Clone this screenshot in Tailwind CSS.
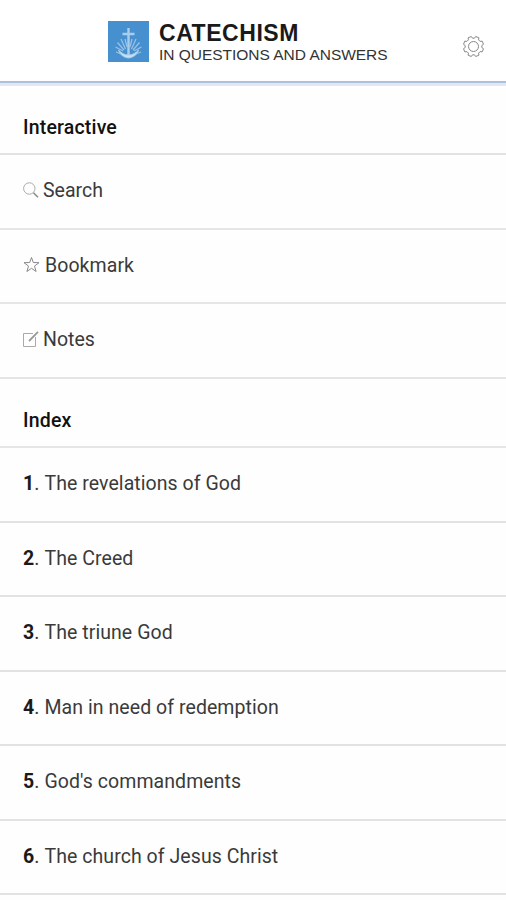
<!DOCTYPE html>
<html lang="en">
<head>
<meta charset="utf-8">
<title>Catechism in Questions and Answers</title>
<script src="https://cdn.jsdelivr.net/npm/@tailwindcss/browser@4"></script>
</head>
<body class="h-[900px] overflow-hidden bg-[#fefefe] font-[Roboto,sans-serif] text-[19.5px] leading-6 text-[#3a3a3a]">
<header class="flex h-[86px] items-start border-b-3 border-[#e6e6f2] bg-white">
  <div class="flex h-[83px] w-full items-start border-b-2 border-[#a9c0df] pt-5 pl-[108px] pr-[21px]">
    <svg class="mt-px h-[41px] w-[41px] shrink-0" viewBox="0 0 41 41" fill="none" stroke="#a9cdec">
      <rect width="41" height="41" fill="#4690cf" stroke="none"/>
      <path d="M20.5 7V34M14.500 13H26.500" stroke-width="2.400"/>
      <path d="M10.500 29C12 34 16 36.500 20.500 37C25 36.500 29 34 30.500 29C28 32 24.500 34 20.500 34C16.500 34 13 32 10.500 29Z" fill="#c9e1f5" stroke-width="1"/>
      <path d="M17.500 28L13 18M16 29L9.500 21.500M15 30L7.500 26M19 26L17 18M23.500 28L28 18M25 29L31.500 21.500M26 30L33.500 26M22 26L24 18M13 33L8 31M28 33L33 31" stroke-width="1.300" opacity=".8"/>
    </svg>
    <div class="ml-[9px] font-['Liberation_Sans',sans-serif] whitespace-nowrap text-[#1a1a1a]">
      <h1 class="pl-px text-[23px] leading-[26px] font-bold tracking-[0.55px]">CATECHISM</h1>
      <p class="ml-px text-[15.5px] leading-[17px] tracking-[-0.02px] text-[#333]">IN QUESTIONS AND ANSWERS</p>
    </div>
    <svg class="mt-[15px] ml-auto h-[23px] w-[23px] shrink-0" viewBox="0 0 23 23" fill="none" stroke="#888" stroke-width="1" stroke-linejoin="round">
      <circle cx="11.500" cy="11.500" r="5"/>
      <path d="M9.300 1.500L10.500 3.200H12.500L13.700 1.500L16.900 2.800L16.600 4.900L18.100 6.400L20.200 6.100L21.500 9.300L19.800 10.500V12.500L21.500 13.700L20.200 16.900L18.100 16.600L16.600 18.100L16.900 20.200L13.700 21.500L12.500 19.800H10.500L9.300 21.500L6.100 20.200L6.400 18.100L4.900 16.600L2.800 16.900L1.500 13.700L3.200 12.500V10.500L1.500 9.300L2.800 6.100L4.900 6.400L6.400 4.900L6.100 2.800Z"/>
    </svg>
  </div>
</header>
<main class="whitespace-nowrap">
  <h2 class="flex h-[69px] items-end border-b-2 border-[#e2e2e2] px-[23px] pb-[13px] font-medium tracking-[0.18px] text-[#111]">Interactive</h2>
  <nav>
    <div class="flex h-[74.5px] items-center border-b-2 border-[#e5e5e5] px-[23px]">
      <svg class="mr-[4px] mb-[3px] h-4 w-4" viewBox="0 0 16 16" fill="none" stroke="#888"><circle cx="6.300" cy="6.500" r="5.700" stroke="#aaa"/><path d="M10.500 10.800L15 15.300" stroke-width="1.500"/></svg>
      <span>Search</span>
    </div>
    <div class="flex h-[74.5px] items-center border-b-2 border-[#e5e5e5] px-[23px]">
      <svg class="mr-[5px] mb-0.5 h-[17px] w-[17px]" viewBox="0 0 17 17" fill="none" stroke="#888"><path d="M8.500 1.500L10.300 6.500L16 6.700L11.500 10.100L13.100 15.500L8.500 12.300L3.900 15.500L5.500 10.100L1 6.700L6.700 6.500Z"/></svg>
      <span class="tracking-[0.07px]">Bookmark</span>
    </div>
    <div class="flex h-[74.5px] items-center border-b-2 border-[#e5e5e5] px-[23px]">
      <svg class="mr-[4px] mb-0.5 h-4 w-4" viewBox="0 0 16 16" fill="none" stroke="#aaa"><path d="M10 2.500H.5V15.500H12.500V6"/><path d="M6 10L15 .8" stroke="#999" stroke-width="1.800"/></svg>
      <span>Notes</span>
    </div>
  </nav>
  <h2 class="flex h-[69.5px] items-end border-b-2 border-[#e5e5e5] px-[23px] pb-[13px] font-medium tracking-[0.18px] text-[#111]">Index</h2>
  <ol class="tracking-[0.06px]">
    <li class="flex h-[74.5px] items-center border-b-2 border-[#e2e2e2] px-[23px]"><b class="w-[21.5px] font-normal"><span class="font-bold text-[#1a1a1a]">1</span>.</b><span>The revelations of God</span></li>
    <li class="flex h-[74.5px] items-center border-b-2 border-[#e2e2e2] px-[23px]"><b class="w-[21.5px] font-normal"><span class="font-bold text-[#1a1a1a]">2</span>.</b><span>The Creed</span></li>
    <li class="flex h-[74.5px] items-center border-b-2 border-[#e2e2e2] px-[23px]"><b class="w-[21.5px] font-normal"><span class="font-bold text-[#1a1a1a]">3</span>.</b><span>The triune God</span></li>
    <li class="flex h-[74.5px] items-center border-b-2 border-[#e2e2e2] px-[23px]"><b class="w-[21.5px] font-normal"><span class="font-bold text-[#1a1a1a]">4</span>.</b><span>Man in need of redemption</span></li>
    <li class="flex h-[74.5px] items-center border-b-2 border-[#e2e2e2] px-[23px]"><b class="w-[21.5px] font-normal"><span class="font-bold text-[#1a1a1a]">5</span>.</b><span>God's commandments</span></li>
    <li class="flex h-[74.5px] items-center border-b-2 border-[#e2e2e2] px-[23px]"><b class="w-[21.5px] font-normal"><span class="font-bold text-[#1a1a1a]">6</span>.</b><span>The church of Jesus Christ</span></li>
  </ol>
</main>
</body>
</html>
